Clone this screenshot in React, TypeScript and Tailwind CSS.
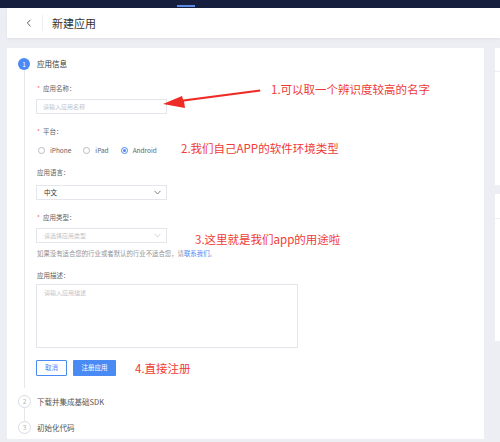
import React from 'react';

const font = { fontFamily: '"Noto Sans CJK SC", "Noto Sans", sans-serif' };

function Label({ text, required }: { text: string; required?: boolean }) {
  return (
    <div className="flex h-[10px] items-center text-[6.5px] leading-none text-[#606266]">
      {required && <span className="mr-[3px] text-[#f56c6c]">*</span>}
      <span>{text}：</span>
    </div>
  );
}

function Chevron({ color }: { color: string }) {
  return (
    <svg width="7" height="5" viewBox="0 0 7 5" fill="none">
      <path d="M0.5 0.8 L3.5 4 L6.5 0.8" stroke={color} strokeWidth="0.8" />
    </svg>
  );
}

function Radio({ label, checked }: { label: string; checked?: boolean }) {
  return (
    <div className="flex items-center gap-[5px]">
      <span
        className={
          checked
            ? 'flex h-[7px] w-[7px] items-center justify-center rounded-full border border-[#4a8af4]'
            : 'h-[7px] w-[7px] rounded-full border border-[#b8bcc4]'
        }
      >
        {checked && <span className="h-[3px] w-[3px] rounded-full bg-[#4a8af4]" />}
      </span>
      <span className="text-[6.5px] leading-none text-[#606266]">{label}</span>
    </div>
  );
}

function Note({ className, children }: { className: string; children: React.ReactNode }) {
  return (
    <div className={`absolute whitespace-nowrap text-[11.5px] leading-none text-[#ef3b36] ${className}`}>
      {children}
    </div>
  );
}

export default function App() {
  return (
    <div className="relative h-[442px] w-[500px] overflow-hidden bg-[#eceef3]" style={font}>
      <div className="relative h-[8px] bg-[#161f3e]">
        <div className="absolute left-[177px] top-[5px] h-[1.5px] w-[18px] bg-[#5b8be3]" />
      </div>

      <div className="ml-[7px] flex h-[30px] items-center bg-white shadow-[0_1px_3px_rgba(0,0,0,0.06)]">
        <svg width="6" height="8" viewBox="0 0 6 8" className="ml-[19px]" fill="none">
          <path d="M4.5 0.8 L1.3 4 L4.5 7.2" stroke="#555" strokeWidth="1" />
        </svg>
        <div className="ml-[10px] h-[16px] w-px bg-[#eeeeee]" />
        <span className="ml-[9px] text-[11px] leading-none text-[#333]">新建应用</span>
      </div>

      <div className="mt-[10px] flex gap-[11px] pl-[7px]">
        <div className="h-[391px] w-[477px] shrink-0 bg-white pl-[11px] pt-[10px]">
          <div className="flex">
            <div className="flex w-[12px] flex-col items-center">
              <div className="flex h-[12px] w-[12px] items-center justify-center rounded-full bg-[#4a8af4] text-[6.5px] leading-none text-white">
                1
              </div>
              <div className="w-px flex-1 bg-[#e6e8ec]" />
            </div>
            <div className="ml-[7px] pb-[12px]">
              <div className="flex h-[12px] items-center text-[7.5px] leading-none text-[#333]">应用信息</div>

              <div className="mt-[13px]">
                <Label text="应用名称" required />
              </div>
              <div className="-ml-px mt-[6px] flex h-[15px] w-[131px] items-center border border-[#e4e6eb] px-[6px] text-[6px] text-[#c0c4cc]">
                请输入应用名称
              </div>

              <div className="mt-[12px]">
                <Label text="平台" required />
              </div>
              <div className="mt-[8px] flex h-[12px] items-center gap-[12px] pl-[1px]">
                <Radio label="iPhone" />
                <Radio label="iPad" />
                <Radio label="Android" checked />
              </div>

              <div className="mt-[11px]">
                <Label text="应用语言" />
              </div>
              <div className="-ml-px mt-[8px] flex h-[15px] w-[131px] items-center justify-between border border-[#e4e6eb] pl-[7px] pr-[5px] text-[6.5px] text-[#333]">
                <span>中文</span>
                <Chevron color="#666" />
              </div>

              <div className="mt-[12px]">
                <Label text="应用类型" required />
              </div>
              <div className="-ml-px mt-[6px] flex h-[15px] w-[131px] items-center justify-between border border-[#e4e6eb] pl-[7px] pr-[5px] text-[6px] text-[#c0c4cc]">
                <span>请选择应用类型</span>
                <Chevron color="#ccc" />
              </div>

              <div className="mt-[6px] flex h-[10px] items-center text-[6.4px] leading-none text-[#909399]">
                如果没有适合您的行业或者默认的行业不适合您，请<span className="text-[#4a8af4]">联系我们</span>。
              </div>

              <div className="mt-[11px]">
                <Label text="应用描述" />
              </div>
              <div className="-ml-px mt-[4px] h-[64px] w-[262px] border border-[#e4e6eb] px-[7px] pt-[5px] text-[6px] leading-none text-[#c0c4cc]">
                请输入应用描述
              </div>

              <div className="-ml-px mt-[12px] flex h-[16px] gap-[6px]">
                <div className="flex w-[31px] items-center justify-center rounded-[1px] border border-[#4a8af4] text-[6.5px] text-[#4a8af4]">
                  取消
                </div>
                <div className="flex w-[43px] items-center justify-center rounded-[1px] bg-[#4a8af4] text-[6.5px] text-white">
                  注册应用
                </div>
              </div>
            </div>
          </div>

          <div className="mt-[7px] flex items-center">
            <div className="flex h-[13px] w-[13px] items-center justify-center rounded-full border border-[#d8dbe0] text-[6.5px] leading-none text-[#b0b3b8]">
              2
            </div>
            <span className="ml-[6px] text-[7.5px] leading-none text-[#555]">下载并集成基础SDK</span>
          </div>
          <div className="ml-[6px] h-[13px] w-px bg-[#e6e8ec]" />
          <div className="flex items-center">
            <div className="flex h-[13px] w-[13px] items-center justify-center rounded-full border border-[#d8dbe0] text-[6.5px] leading-none text-[#b0b3b8]">
              3
            </div>
            <span className="ml-[6px] text-[7.5px] leading-none text-[#555]">初始化代码</span>
          </div>
        </div>

        <div className="flex w-[60px] shrink-0 flex-col gap-[9px]">
          <div className="h-[137px] bg-white">
            <div className="h-[24px] border-b border-[#eceef3]" />
          </div>
          <div className="h-[147px] bg-white">
            <div className="h-[25px] border-b border-[#eceef3]" />
          </div>
        </div>
      </div>

      <svg className="absolute left-0 top-0" width="500" height="442" viewBox="0 0 500 442">
        <polygon points="260,89.5 260.4,91.5 184,101.5 185,108 163,104 182,96 183,99.5" fill="#ef2b25" />
      </svg>

      <Note className="left-[271px] top-[84px]">1.可以取一个辨识度较高的名字</Note>
      <Note className="left-[181px] top-[143px]">2.我们自己APP的软件环境类型</Note>
      <Note className="left-[195px] top-[234px]">3.这里就是我们app的用途啦</Note>
      <Note className="left-[135px] top-[363px]">4.直接注册</Note>
    </div>
  );
}
